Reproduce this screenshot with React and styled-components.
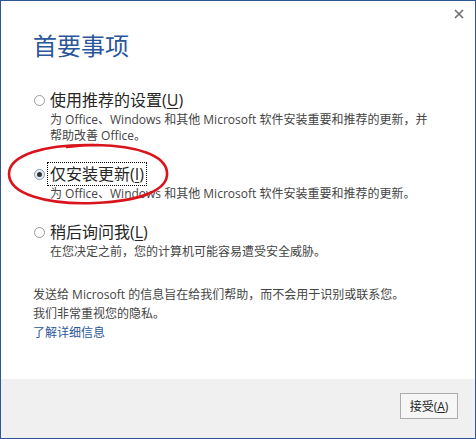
import React from "react";
import styled, { createGlobalStyle } from "styled-components";

const GlobalStyle = createGlobalStyle`
  html, body {
    margin: 0;
    padding: 0;
    background: #ffffff;
  }
  body {
    font-family: "Open Sans", "Noto Sans CJK SC", sans-serif;
  }
`;

const options = [
  {
    label: "使用推荐的设置",
    key: "U",
    lines: [
      "为 Office、Windows 和其他 Microsoft 软件安装重要和推荐的更新，并",
      "帮助改善 Office。",
    ],
  },
  {
    label: "仅安装更新",
    key: "I",
    checked: true,
    lines: ["为 Office、Windows 和其他 Microsoft 软件安装重要和推荐的更新。"],
  },
  {
    label: "稍后询问我",
    key: "L",
    lines: ["在您决定之前，您的计算机可能容易遭受安全威胁。"],
  },
];

export default function App() {
  return (
    <>
      <GlobalStyle />
      <Window>
        <TitleBar>
          <CloseButton aria-label="关闭">
            <svg width="10" height="10" viewBox="0 0 10 10">
              <path d="M1 1 L9 9 M9 1 L1 9" stroke="#6f6f6f" strokeWidth="1.7" />
            </svg>
          </CloseButton>
        </TitleBar>
        <Content>
          <Title>首要事项</Title>
          <OptionList>
            {options.map((opt) => (
              <Option key={opt.key}>
                <OptionRow>
                  <Radio $checked={opt.checked} />
                  <Label $focused={opt.checked}>
                    {opt.label}(<u>{opt.key}</u>)
                  </Label>
                </OptionRow>
                <Desc>
                  {opt.lines.map((line, i) => (
                    <DescLine key={i}>{line}</DescLine>
                  ))}
                </Desc>
              </Option>
            ))}
          </OptionList>
          <Notice>
            <p>发送给 Microsoft 的信息旨在给我们帮助，而不会用于识别或联系您。</p>
            <p>我们非常重视您的隐私。</p>
            <Link href="#">了解详细信息</Link>
          </Notice>
        </Content>
        <Footer>
          <AcceptButton>
            接受(<u>A</u>)
          </AcceptButton>
        </Footer>
        <Marker width="170" height="70" viewBox="0 0 170 70">
          <path
            d="M88 3 C 40 2, 4 13, 4 32 C 4 52, 42 63, 90 61 C 136 59, 164 48, 162 30 C 160 13, 132 4, 92 3 C 80 3, 70 4, 62 5"
            fill="none"
            stroke="#d9141c"
            strokeWidth="2.6"
            strokeLinecap="round"
          />
        </Marker>
      </Window>
    </>
  );
}

const Window = styled.div`
  position: relative;
  width: 476px;
  height: 439px;
  box-sizing: border-box;
  border: 1px solid #2d5793;
  background: #ffffff;
  display: flex;
  flex-direction: column;
  overflow: hidden;
`;

const TitleBar = styled.div`
  height: 28px;
  display: flex;
  justify-content: flex-end;
  align-items: center;
  padding-right: 9px;
`;

const CloseButton = styled.button`
  width: 14px;
  height: 14px;
  padding: 0;
  border: none;
  background: transparent;
  display: flex;
  align-items: center;
  justify-content: center;
  margin-top: -2px;
`;

const Content = styled.div`
  flex: 1;
  padding: 0 32px;
  color: #333333;
`;

const Title = styled.h1`
  margin: 0;
  font-family: "Noto Sans CJK SC", sans-serif;
  font-size: 24px;
  line-height: 32px;
  font-weight: 400;
  color: #2b579a;
`;

const OptionList = styled.div`
  margin-top: 27px;
  display: flex;
  flex-direction: column;
  gap: 18px;
`;

const Option = styled.div`
  display: flex;
  flex-direction: column;
`;

const OptionRow = styled.div`
  display: flex;
  align-items: center;
  height: 24px;
`;

const Radio = styled.span`
  position: relative;
  width: 11px;
  height: 11px;
  margin-left: 1px;
  margin-right: 4px;
  box-sizing: border-box;
  border-radius: 50%;
  border: 1px solid ${(p) => (p.$checked ? "#8a9bb5" : "#9a9a9a")};
  background: ${(p) => (p.$checked ? "#e8eef7" : "#ffffff")};
  &::after {
    content: "";
    display: ${(p) => (p.$checked ? "block" : "none")};
    position: absolute;
    left: 2px;
    top: 2px;
    width: 5px;
    height: 5px;
    border-radius: 50%;
    background: #333333;
  }
`;

const Label = styled.span`
  font-size: 16px;
  line-height: 20px;
  color: #262626;
  padding: 0 1px;
  outline: ${(p) => (p.$focused ? "1px dotted #000000" : "none")};
  outline-offset: 1px;
  u {
    text-underline-offset: 2px;
  }
`;

const Desc = styled.div`
  padding-left: 17px;
  font-size: 12px;
  line-height: 16px;
  color: #444444;
`;

const DescLine = styled.div`
  white-space: nowrap;
`;

const Notice = styled.div`
  margin-top: 25px;
  font-size: 12px;
  line-height: 19px;
  color: #444444;
  p {
    margin: 0;
  }
`;

const Link = styled.a`
  display: block;
  color: #2b579a;
  text-decoration: none;
`;

const Footer = styled.div`
  height: 59px;
  box-sizing: border-box;
  background: #f0f0f0;
  display: flex;
  justify-content: flex-end;
  align-items: flex-start;
  padding: 14px 17px 0 0;
`;

const AcceptButton = styled.button`
  width: 58px;
  height: 26px;
  box-sizing: border-box;
  border: 1px solid #acacac;
  background: #f6f6f6;
  font-family: "Open Sans", "Noto Sans CJK SC", sans-serif;
  font-size: 12px;
  color: #222222;
  padding: 0;
`;

const Marker = styled.svg`
  position: absolute;
  left: 4px;
  top: 141px;
  pointer-events: none;
`;
